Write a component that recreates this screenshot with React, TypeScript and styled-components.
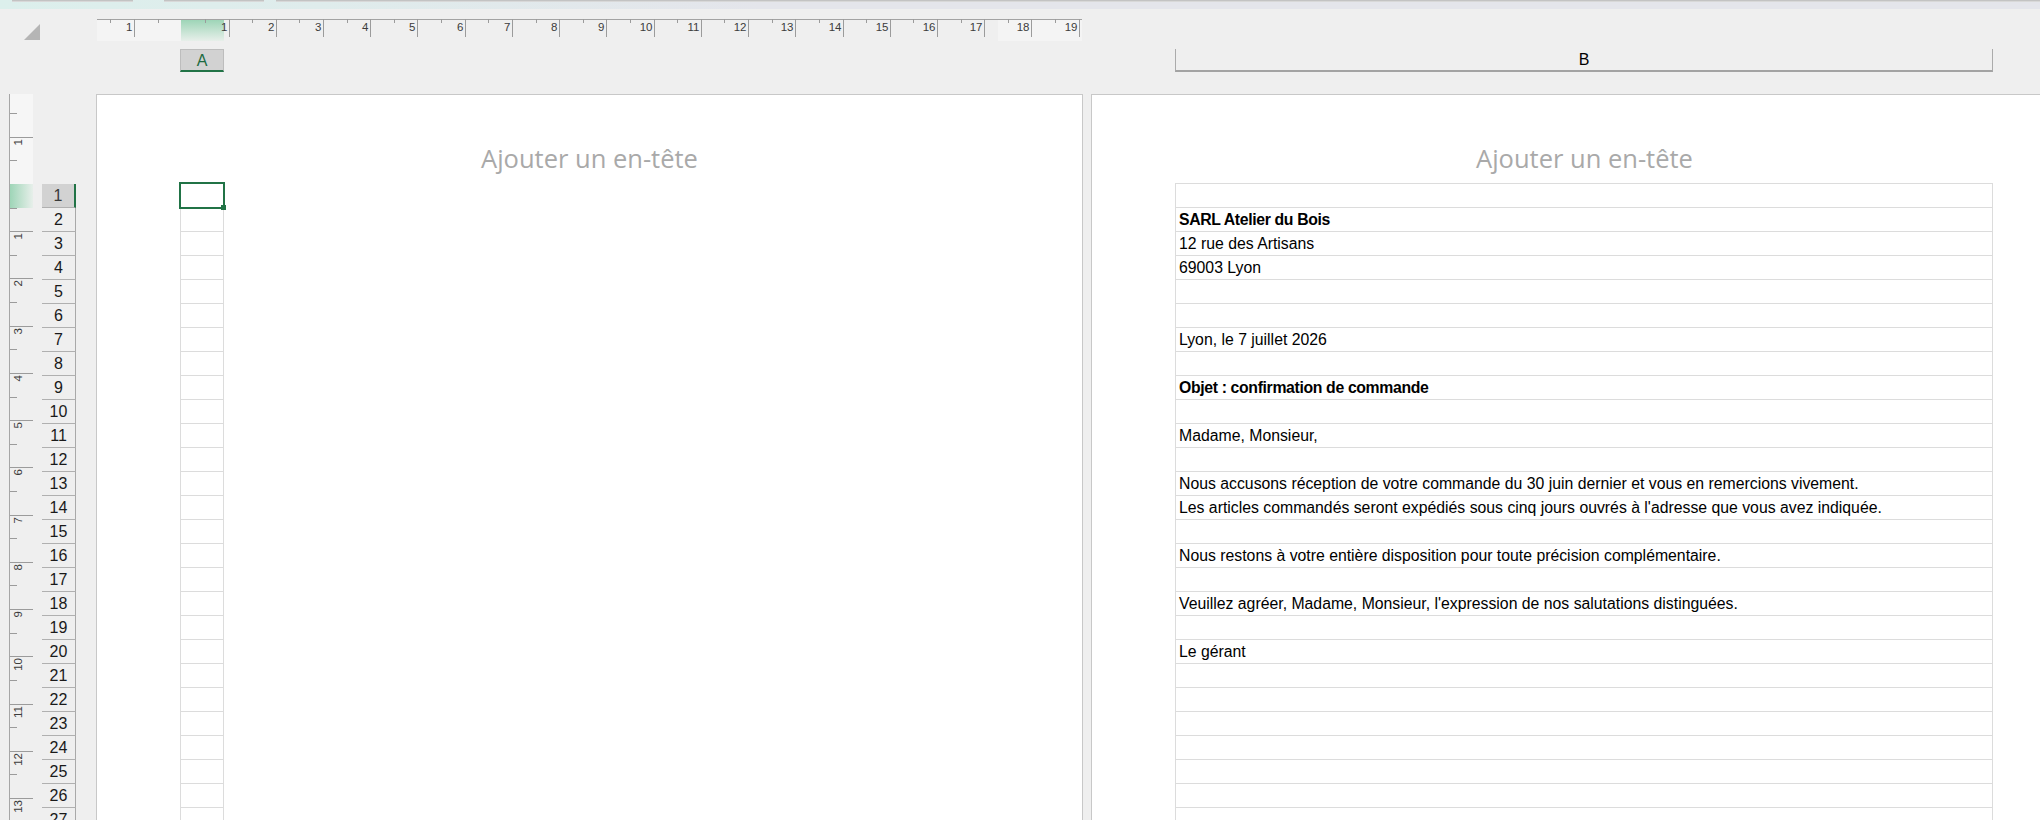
import React from 'react'
import styled, { createGlobalStyle } from 'styled-components'

const GlobalStyle = createGlobalStyle`
  html, body {
    margin: 0;
    padding: 0;
    background: #efefef;
    overflow: hidden;
  }
  body {
    font-family: 'Liberation Sans', Arial, sans-serif;
  }
`

const CM = 47.23
const ROW_COUNT = 28
const PAGE_WIDTH = 987

interface SheetLine {
  text: string
  bold?: boolean
}

const letterLines: Record<number, SheetLine> = {
  2: { text: 'SARL Atelier du Bois', bold: true },
  3: { text: '12 rue des Artisans' },
  4: { text: '69003 Lyon' },
  7: { text: 'Lyon, le 7 juillet 2026' },
  9: { text: 'Objet : confirmation de commande', bold: true },
  11: { text: 'Madame, Monsieur,' },
  13: { text: 'Nous accusons réception de votre commande du 30 juin dernier et vous en remercions vivement.' },
  14: { text: "Les articles commandés seront expédiés sous cinq jours ouvrés à l'adresse que vous avez indiquée." },
  16: { text: 'Nous restons à votre entière disposition pour toute précision complémentaire.' },
  18: { text: "Veuillez agréer, Madame, Monsieur, l'expression de nos salutations distinguées." },
  20: { text: 'Le gérant' },
}

const rows = Array.from({ length: ROW_COUNT }, (_, i) => i + 1)

const Screen = styled.div`
  width: 2040px;
  height: 820px;
  overflow: hidden;
  display: flex;
  flex-direction: column;
  background: #efefef;
`

const TopBand = styled.div`
  flex: none;
  height: 9px;
  display: flex;
  align-items: flex-start;
  background: linear-gradient(90deg, #dcefec 0px, #dfecec 320px, #e4e5eb 760px, #e4e5eb 100%);
`

const BandEdge = styled.div<{ $offset: number; $width?: number }>`
  height: 1px;
  margin-left: ${props => props.$offset}px;
  width: ${props => (props.$width ? `${props.$width}px` : 'auto')};
  flex: ${props => (props.$width ? 'none' : '1')};
  background: #c3c3c3;
  box-shadow: 0 1px 0 #d8d8d8;
`

// gutter (rulers + row numbers) then the two printed pages, 8px apart
const Columns = styled.div`
  display: grid;
  grid-template-columns: 88px ${PAGE_WIDTH}px ${PAGE_WIDTH}px;
  column-gap: 8px;
  flex: none;
`

const RulerRow = styled(Columns)`
  height: 40px;
`

const CornerCell = styled.div`
  padding: 15px 0 0 24px;
`

const RulerSlot = styled.div`
  padding: 10px 0 0 1px;
`

const HeaderRow = styled(Columns)`
  height: 23px;
  margin-bottom: 22px;
`

const HeaderSlot = styled.div`
  padding-left: 84px;
`

const ColumnHeader = styled.div<{ $width: number; $active?: boolean }>`
  box-sizing: border-box;
  width: ${props => props.$width}px;
  height: 23px;
  display: flex;
  justify-content: center;
  padding-top: 1px;
  line-height: 20px;
  font-size: 16px;
  background: ${props => (props.$active ? '#d2d2d2' : 'transparent')};
  color: ${props => (props.$active ? '#1d6b41' : '#000')};
  border-left: 1px solid ${props => (props.$active ? '#bdbdbd' : '#ababab')};
  border-right: 1px solid ${props => (props.$active ? '#bdbdbd' : '#ababab')};
  border-top: ${props => (props.$active ? '1px solid #bdbdbd' : 'none')};
  border-bottom: 2px solid ${props => (props.$active ? '#217346' : '#a3a3a3')};
`

const Workspace = styled(Columns)`
  flex: 1;
  min-height: 0;
`

const Gutter = styled.div`
  display: flex;
  padding-left: 9px;
  gap: 9px;
`

const VerticalRulerBox = styled.div`
  width: 23px;
  border-left: 1px solid #a6a6a6;
  overflow: hidden;
`

const RowHeaderColumn = styled.div`
  box-sizing: border-box;
  width: 34px;
  padding-top: 90px;
`

const RowHeaderCell = styled.div<{ $active?: boolean }>`
  box-sizing: border-box;
  height: 24px;
  padding-top: 1px;
  line-height: 22px;
  text-align: center;
  font-size: 16px;
  color: ${props => (props.$active ? '#3a3a3a' : '#1a1a1a')};
  background: ${props => (props.$active ? '#d2d2d2' : 'transparent')};
  border-bottom: 1px solid #b0b0b0;
  border-right: ${props => (props.$active ? '2px solid #217346' : '1px solid #a9a9a9')};
`

const Page = styled.div`
  box-sizing: border-box;
  background: #fff;
  border: 1px solid #c8c8c8;
  border-bottom: none;
  overflow: hidden;
`

const PageHeaderZone = styled.div`
  box-sizing: border-box;
  height: 88px;
  padding-top: 48px;
  text-align: center;
  font-family: 'Open Sans', 'Liberation Sans', sans-serif;
  font-size: 25.5px;
  line-height: 30px;
  color: #a9a9a9;
`

const SheetColumn = styled.div<{ $width: number }>`
  box-sizing: border-box;
  margin-left: 83px;
  width: ${props => props.$width}px;
  border: 1px solid #dcdcdc;
  border-bottom: none;
`

const Cell = styled.div<{ $bold?: boolean }>`
  position: relative;
  box-sizing: border-box;
  height: 24px;
  padding: 1px 3px 0;
  line-height: 22px;
  font-size: 15.8px;
  font-weight: ${props => (props.$bold ? 700 : 400)};
  letter-spacing: ${props => (props.$bold ? '-0.35px' : '0')};
  color: #000;
  white-space: nowrap;
  border-bottom: 1px solid #dcdcdc;
`

const Selection = styled.div`
  position: absolute;
  inset: -2px;
  border: 2px solid #217346;
`

const FillHandle = styled.div`
  position: absolute;
  right: -3px;
  bottom: -3px;
  width: 5px;
  height: 5px;
  background: #217346;
`

const RulerSvg = styled.svg`
  display: block;
  font-family: 'Liberation Sans', Arial, sans-serif;
`

const rulerSteps = (from: number, to: number) => {
  const steps: number[] = []
  for (let k = from; k <= to; k += 0.5) {
    if (k !== 0) steps.push(k)
  }
  return steps
}

const HorizontalRuler = () => {
  const zero = 84.3
  const steps = rulerSteps(-1.5, 19)

  return (
    <RulerSvg width={985} height={22}>
      <defs>
        <linearGradient id="hSel" x1="0" y1="0" x2="0" y2="1">
          <stop offset="0" stopColor="#9ed5b7" />
          <stop offset="1" stopColor="#e7efea" />
        </linearGradient>
      </defs>
      <rect x={0} y={0} width={84} height={22} fill="#f4f4f4" />
      <rect x={901} y={0} width={84} height={22} fill="#f4f4f4" />
      <rect x={84} y={1} width={43} height={21} fill="url(#hSel)" />
      <line x1={0} y1={0.5} x2={985} y2={0.5} stroke="#a3a3a3" />
      {steps.map(k => {
        const x = Math.round(zero + k * CM) + 0.5
        const major = Number.isInteger(k)
        return (
          <g key={k}>
            <line x1={x} y1={0} x2={x} y2={major ? 18 : 4} stroke="#9b9b9b" />
            {major && (
              <text x={x - 2} y={11.7} textAnchor="end" fontSize={11.5} fill="#3c3c3c">
                {Math.abs(k)}
              </text>
            )}
          </g>
        )
      })}
    </RulerSvg>
  )
}

const VerticalRuler = () => {
  const zero = 90
  const steps = rulerSteps(-1.5, 14)

  return (
    <RulerSvg width={23} height={726}>
      <defs>
        <linearGradient id="vSel" x1="0" y1="0" x2="1" y2="0">
          <stop offset="0" stopColor="#9ed5b7" />
          <stop offset="1" stopColor="#e7efea" />
        </linearGradient>
      </defs>
      <rect x={0} y={0} width={23} height={zero} fill="#f6f6f6" />
      <rect x={0} y={zero} width={23} height={24} fill="url(#vSel)" />
      {steps.map(k => {
        const y = Math.round(zero + k * CM) + 0.5
        const major = Number.isInteger(k)
        return (
          <g key={k}>
            <line x1={0} y1={y} x2={major ? 23 : 7} y2={y} stroke="#9b9b9b" />
            {major && (
              <text
                transform={`translate(12 ${y + 1.5}) rotate(-90)`}
                textAnchor="end"
                fontSize={11.5}
                fill="#3c3c3c"
              >
                {Math.abs(k)}
              </text>
            )}
          </g>
        )
      })}
    </RulerSvg>
  )
}

const SelectAllCorner = () => (
  <svg width={16} height={16}>
    <polygon points="16,0 16,16 0,16" fill="#b5b5b5" />
  </svg>
)

export default function App() {
  return (
    <Screen>
      <GlobalStyle />
      <TopBand>
        <BandEdge $offset={12} $width={121} />
        <BandEdge $offset={31} $width={100} />
        <BandEdge $offset={12} />
      </TopBand>

      <RulerRow>
        <CornerCell>
          <SelectAllCorner />
        </CornerCell>
        <RulerSlot>
          <HorizontalRuler />
        </RulerSlot>
        <div />
      </RulerRow>

      <HeaderRow>
        <div />
        <HeaderSlot>
          <ColumnHeader $width={44} $active>
            A
          </ColumnHeader>
        </HeaderSlot>
        <HeaderSlot>
          <ColumnHeader $width={818}>B</ColumnHeader>
        </HeaderSlot>
      </HeaderRow>

      <Workspace>
        <Gutter>
          <VerticalRulerBox>
            <VerticalRuler />
          </VerticalRulerBox>
          <RowHeaderColumn>
            {rows.map(row => (
              <RowHeaderCell key={row} $active={row === 1}>
                {row}
              </RowHeaderCell>
            ))}
          </RowHeaderColumn>
        </Gutter>

        <Page>
          <PageHeaderZone>Ajouter un en-tête</PageHeaderZone>
          <SheetColumn $width={44}>
            {rows.map(row => (
              <Cell key={row}>
                {row === 1 && (
                  <Selection>
                    <FillHandle />
                  </Selection>
                )}
              </Cell>
            ))}
          </SheetColumn>
        </Page>

        <Page>
          <PageHeaderZone>Ajouter un en-tête</PageHeaderZone>
          <SheetColumn $width={818}>
            {rows.map(row => {
              const line = letterLines[row]
              return (
                <Cell key={row} $bold={line?.bold}>
                  {line?.text}
                </Cell>
              )
            })}
          </SheetColumn>
        </Page>
      </Workspace>
    </Screen>
  )
}
